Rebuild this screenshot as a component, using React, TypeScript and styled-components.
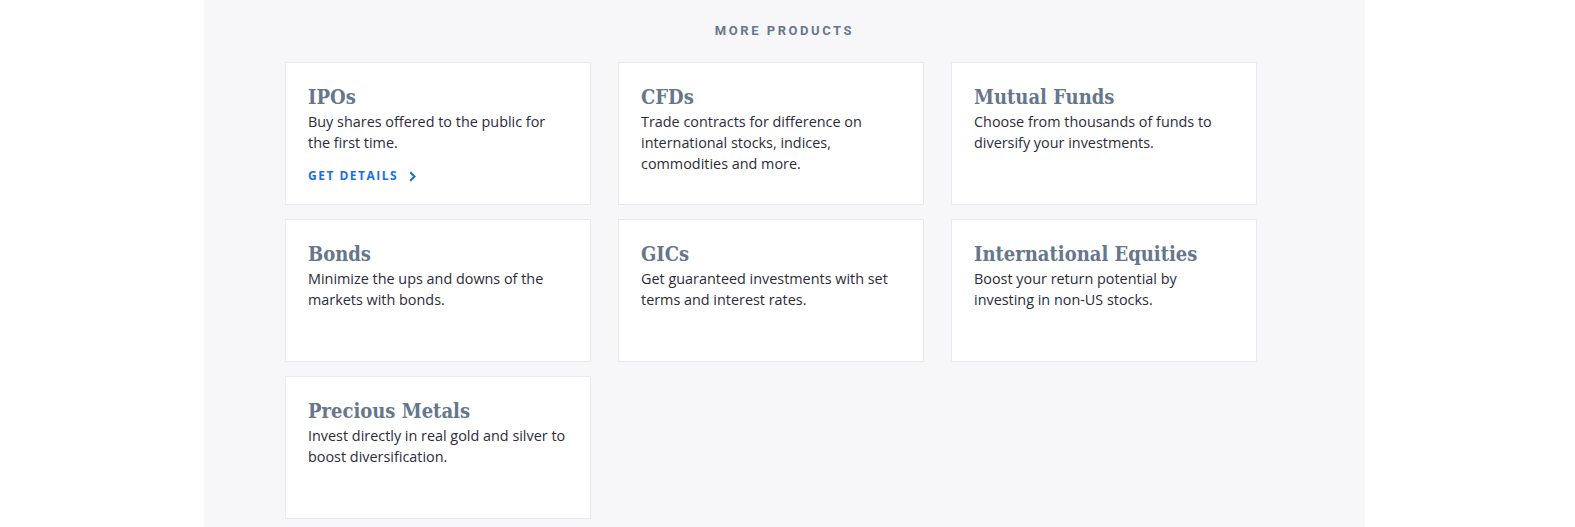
import styled, { createGlobalStyle } from "styled-components";

const GlobalStyle = createGlobalStyle`
  html, body {
    margin: 0;
    padding: 0;
    background: #ffffff;
  }
`;

const Panel = styled.section`
  margin-left: 204px;
  width: 1161px;
  min-height: 527px;
  background: #f7f7f9;
  padding: 21px 0 0;
  box-sizing: border-box;
`;

const SectionTitle = styled.h2`
  margin: 0 0 21px;
  text-align: center;
  font-family: Roboto, "Liberation Sans", sans-serif;
  font-weight: 700;
  font-size: 13px;
  line-height: 20px;
  letter-spacing: 2.55px;
  color: #67778d;
`;

const Grid = styled.div`
  width: 999px;
  margin: 0 auto;
  display: grid;
  grid-template-columns: repeat(3, 306px);
  column-gap: 27px;
  row-gap: 14px;
`;

const Card = styled.div`
  box-sizing: border-box;
  height: 143px;
  background: #ffffff;
  border: 1px solid #e9eaee;
  padding: 21px 22px 0;
`;

const CardTitle = styled.h3`
  margin: 0;
  font-family: "DejaVu Serif Condensed", "DejaVu Serif", "Liberation Serif", serif;
  font-stretch: condensed;
  font-weight: 700;
  font-size: 20px;
  line-height: 27px;
  color: #66768b;
`;

const CardText = styled.p`
  margin: 0;
  font-family: "Open Sans", "Liberation Sans", sans-serif;
  font-size: 14.4px;
  line-height: 21px;
  color: #2d2b3b;
`;

const DetailsLink = styled.a`
  display: inline-flex;
  align-items: center;
  gap: 11px;
  margin-top: 14px;
  font-family: "Open Sans", "Liberation Sans", sans-serif;
  font-weight: 700;
  font-size: 12px;
  line-height: 18px;
  letter-spacing: 1.5px;
  color: #1a6fdd;
  text-decoration: none;
`;

const products = [
  {
    title: "IPOs",
    text: "Buy shares offered to the public for the first time.",
    link: true,
  },
  {
    title: "CFDs",
    text: "Trade contracts for difference on international stocks, indices, commodities and more.",
  },
  {
    title: "Mutual Funds",
    text: "Choose from thousands of funds to diversify your investments.",
  },
  {
    title: "Bonds",
    text: "Minimize the ups and downs of the markets with bonds.",
  },
  {
    title: "GICs",
    text: "Get guaranteed investments with set terms and interest rates.",
  },
  {
    title: "International Equities",
    text: "Boost your return potential by investing in non-US stocks.",
  },
  {
    title: "Precious Metals",
    text: "Invest directly in real gold and silver to boost diversification.",
  },
];

const Chevron = () => (
  <svg width="7" height="11" viewBox="0 0 7 11">
    <polyline
      points="1.2,1.2 5.5,5.5 1.2,9.8"
      fill="none"
      stroke="#1a6fdd"
      strokeWidth="2.1"
    />
  </svg>
);

export default function App() {
  return (
    <>
      <GlobalStyle />
      <Panel>
        <SectionTitle>MORE PRODUCTS</SectionTitle>
        <Grid>
          {products.map((p) => (
            <Card key={p.title}>
              <CardTitle>{p.title}</CardTitle>
              <CardText>{p.text}</CardText>
              {p.link && (
                <DetailsLink href="#">
                  GET DETAILS
                  <Chevron />
                </DetailsLink>
              )}
            </Card>
          ))}
        </Grid>
      </Panel>
    </>
  );
}
